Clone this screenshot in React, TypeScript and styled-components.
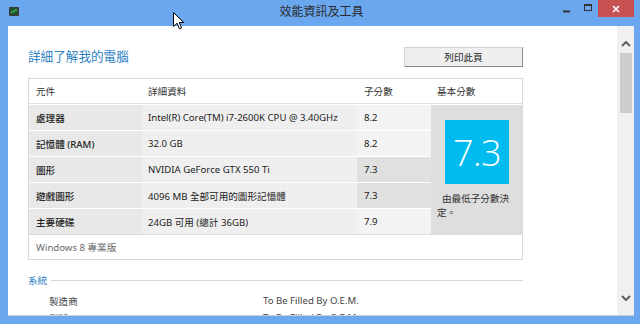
import React from "react"
import styled, { createGlobalStyle } from "styled-components"

const GlobalStyle = createGlobalStyle`
  html, body {
    margin: 0;
    padding: 0;
    background: #6aa7ee;
    overflow: hidden;
  }
`

const FONT = `"Noto Sans", "Noto Sans CJK TC", sans-serif`

const Window = styled.div`
  position: relative;
  width: 640px;
  height: 324px;
  display: flex;
  flex-direction: column;
  background: #6aa7ee;
  font-family: ${FONT};
  color: #333;
`

const TitleBar = styled.div`
  height: 26px;
  display: flex;
  align-items: flex-start;
`

const AppIcon = styled.div`
  width: 84px;
  padding: 7px 0 0 9px;
  line-height: 0;
`

const TitleText = styled.div`
  flex: 1;
  text-align: center;
  padding-top: 4px;
  font-size: 12px;
  line-height: 16px;
  color: #2b2b2b;
`

const Controls = styled.div`
  width: 84px;
  display: flex;
  justify-content: flex-end;
  padding-right: 6px;
`

const CtrlButton = styled.div`
  width: 20px;
  height: 17px;
  margin-left: 2px;
  display: flex;
  align-items: center;
  justify-content: center;
  line-height: 0;
`

const CloseButton = styled.div`
  width: 36px;
  height: 17px;
  display: flex;
  align-items: center;
  justify-content: center;
  background-color: #c75050;
  line-height: 0;
`

const Client = styled.div`
  flex: 1;
  margin: 0 6px 8px 8px;
  display: flex;
  background: #fff;
  border-bottom: 1px solid #c8d2dc;
  overflow: hidden;
`

const Content = styled.div`
  flex: 1;
  padding: 21px 0 0 20px;
  overflow: hidden;
`

const Inner = styled.div`
  width: 495px;
`

const TopRow = styled.div`
  display: flex;
  justify-content: space-between;
  align-items: center;
  height: 20px;
`

const Heading = styled.h1`
  margin: 0;
  font-size: 12.6px;
  font-weight: 400;
  color: #2f82c4;
  line-height: 16px;
`

const PrintButton = styled.button`
  width: 119px;
  height: 20px;
  padding: 0;
  font-family: ${FONT};
  font-size: 9.6px;
  color: #222;
  background: #efefef;
  border: 1px solid #d2d2d2;
  border-right-color: #8c8c8c;
  border-bottom-color: #8c8c8c;
`

const Table = styled.div`
  margin-top: 11px;
  display: grid;
  grid-template-columns: 113px 215px 74px 91px;
  row-gap: 1px;
  border: 1px solid #d9d9d9;
  background: #fff;
  font-size: 9.6px;
`

const HeadCell = styled.div<{ $pad: number }>`
  height: 24px;
  display: flex;
  align-items: center;
  padding-left: ${({ $pad }) => $pad}px;
  border-bottom: 1px solid #e0e0e0;
  color: #333;
`

const Cell = styled.div<{ $bg: string; $pad: number; $bold?: boolean }>`
  height: 25px;
  display: flex;
  align-items: center;
  padding-left: ${({ $pad }) => $pad}px;
  background: ${({ $bg }) => $bg};
  font-weight: ${({ $bold }) => ($bold ? 500 : 400)};
  color: #222;
  white-space: nowrap;
`

const ScoreCell = styled.div`
  grid-column: 4;
  grid-row: 2 / span 5;
  background: #dedede;
  padding-top: 15px;
`

const ScoreBox = styled.div`
  margin-left: 14px;
  width: 64px;
  height: 64px;
  background: #00bbf0;
  color: #fff;
  font-family: "Open Sans", "Noto Sans", sans-serif;
  font-weight: 300;
  font-size: 36px;
  display: flex;
  align-items: center;
  justify-content: center;
  letter-spacing: -0.5px;
`

const ScoreNote = styled.div`
  margin: 8px 0 0 6px;
  text-indent: 5px;
  font-size: 9.6px;
  line-height: 14px;
  color: #333;
  white-space: nowrap;
`

const Footer = styled.div`
  grid-column: 1 / span 4;
  height: 24px;
  display: flex;
  align-items: center;
  padding-left: 7px;
  border-top: 1px solid #dcdcdc;
  margin-top: -1px;
  color: #6a6a6a;
  font-size: 9.6px;
`

const Section = styled.div`
  margin-top: 13px;
  height: 14px;
  display: flex;
  align-items: center;
  gap: 4px;
`

const SectionLabel = styled.span`
  font-size: 9.6px;
  color: #2f82c4;
`

const SectionLine = styled.div`
  flex: 1;
  height: 1px;
  background: #d8d8d8;
`

const PropList = styled.div`
  margin-top: 5px;
  padding-left: 21px;
  display: grid;
  grid-template-columns: 214px 1fr;
  grid-auto-rows: 17px;
  align-items: center;
  font-size: 9.6px;
  color: #444;
`

const ScrollBar = styled.div`
  width: 17px;
  background: #f0f0f0;
  display: flex;
  flex-direction: column;
  align-items: center;
`

const ArrowBtn = styled.div<{ $top?: boolean }>`
  width: 17px;
  height: 17px;
  margin: ${({ $top }) => ($top ? "9px 0 0" : "0 0 9px")};
  display: flex;
  align-items: center;
  justify-content: center;
  line-height: 0;
`

const Track = styled.div`
  flex: 1;
  width: 17px;
  display: flex;
  justify-content: center;
`

const Thumb = styled.div`
  width: 12px;
  height: 60px;
  margin-top: 1px;
  background: #cdcdcd;
`

const Cursor = styled.svg`
  position: absolute;
  left: 173px;
  top: 12px;
`

const rows = [
  { name: "處理器", detail: "Intel(R) Core(TM) i7-2600K CPU @ 3.40GHz", score: "8.2", low: false },
  { name: "記憶體 (RAM)", detail: "32.0 GB", score: "8.2", low: false },
  { name: "圖形", detail: "NVIDIA GeForce GTX 550 Ti", score: "7.3", low: true },
  { name: "遊戲圖形", detail: "4096 MB 全部可用的圖形記憶體", score: "7.3", low: true },
  { name: "主要硬碟", detail: "24GB 可用 (總計 36GB)", score: "7.9", low: false },
]

const props = [
  ["製造商", "To Be Filled By O.E.M."],
  ["型號", "To Be Filled By O.E.M."],
]

export default function App() {
  return (
    <>
      <GlobalStyle />
      <Window>
        <TitleBar>
          <AppIcon>
            <svg width="10" height="9" viewBox="0 0 10 9">
              <rect x="0" y="0" width="10" height="9" rx="1" fill="#3a3a3a" />
              <rect x="1.5" y="1.5" width="7" height="6" fill="#1d5a2a" />
              <path d="M2 6 L3.5 4 L5 5 L6.5 2.5 L8 3.5" stroke="#4fd35a" strokeWidth="1" fill="none" />
            </svg>
          </AppIcon>
          <TitleText>效能資訊及工具</TitleText>
          <Controls>
            <CtrlButton>
              <svg width="7" height="17" viewBox="0 0 7 17">
                <rect x="0" y="10.5" width="7" height="2" fill="#333" />
              </svg>
            </CtrlButton>
            <CtrlButton>
              <svg width="8" height="17" viewBox="0 0 8 17">
                <rect x="0.5" y="4.5" width="7" height="6" fill="none" stroke="#333" strokeWidth="1" />
                <rect x="0" y="4" width="8" height="2" fill="#333" />
              </svg>
            </CtrlButton>
            <CloseButton>
              <svg width="8" height="8" viewBox="0 0 8 8">
                <path d="M1 1 L7 7 M7 1 L1 7" stroke="#fff" strokeWidth="1.6" />
              </svg>
            </CloseButton>
          </Controls>
        </TitleBar>
        <Client>
          <Content>
            <Inner>
              <TopRow>
                <Heading>詳細了解我的電腦</Heading>
                <PrintButton>列印此頁</PrintButton>
              </TopRow>
              <Table>
                <HeadCell $pad={7}>元件</HeadCell>
                <HeadCell $pad={6}>詳細資料</HeadCell>
                <HeadCell $pad={7}>子分數</HeadCell>
                <HeadCell $pad={6}>基本分數</HeadCell>
                {rows.map((r, i) => (
                  <React.Fragment key={r.name}>
                    <Cell $bg="#e8e8e8" $pad={7} $bold style={{ gridRow: i + 2, gridColumn: 1 }}>
                      {r.name}
                    </Cell>
                    <Cell $bg="#efefef" $pad={6} style={{ gridRow: i + 2, gridColumn: 2 }}>
                      {r.detail}
                    </Cell>
                    <Cell $bg={r.low ? "#e0e0e0" : "#f3f3f3"} $pad={7} style={{ gridRow: i + 2, gridColumn: 3 }}>
                      {r.score}
                    </Cell>
                  </React.Fragment>
                ))}
                <ScoreCell>
                  <ScoreBox>7.3</ScoreBox>
                  <ScoreNote>
                    由最低子分數決
                    <br />
                    定。
                  </ScoreNote>
                </ScoreCell>
                <Footer>Windows 8 專業版</Footer>
              </Table>
              <Section>
                <SectionLabel>系統</SectionLabel>
                <SectionLine />
              </Section>
              <PropList>
                {props.map(([k, v]) => (
                  <React.Fragment key={k}>
                    <span>{k}</span>
                    <span>{v}</span>
                  </React.Fragment>
                ))}
              </PropList>
            </Inner>
          </Content>
          <ScrollBar>
            <ArrowBtn $top>
              <svg width="10" height="6" viewBox="0 0 10 6">
                <path d="M1 5 L5 1 L9 5" stroke="#606060" strokeWidth="2" fill="none" />
              </svg>
            </ArrowBtn>
            <Track>
              <Thumb />
            </Track>
            <ArrowBtn>
              <svg width="10" height="6" viewBox="0 0 10 6">
                <path d="M1 1 L5 5 L9 1" stroke="#606060" strokeWidth="2" fill="none" />
              </svg>
            </ArrowBtn>
          </ScrollBar>
        </Client>
        <Cursor width="12" height="18" viewBox="0 0 12 18">
          <path d="M0.5 0.5 L0.5 14.5 L4 11.2 L6.5 16.8 L8.6 15.9 L6.2 10.5 L10.8 10.5 Z" fill="#fff" stroke="#000" strokeWidth="1" />
        </Cursor>
      </Window>
    </>
  )
}
